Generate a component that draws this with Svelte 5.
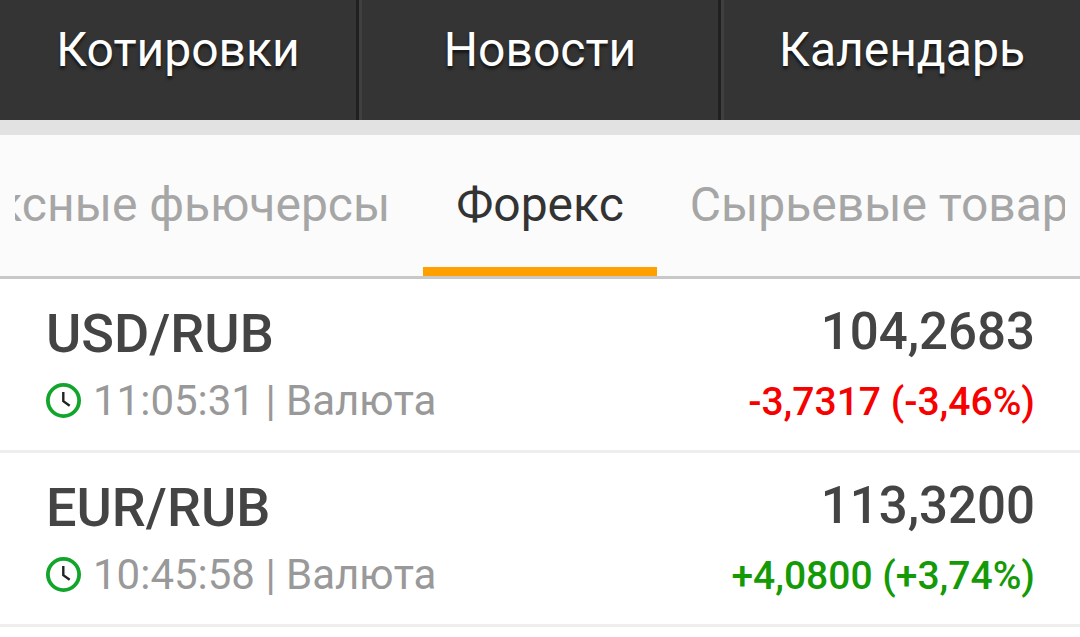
<script lang="ts">
	interface Quote {
		pair: string;
		time: string;
		type: string;
		price: string;
		change: string;
		rising: boolean;
	}

	const sections = ["Котировки", "Новости", "Календарь"];
	const categories = ["Индексные фьючерсы", "Форекс", "Сырьевые товары"];

	const quotes: Quote[] = [
		{
			pair: "USD/RUB",
			time: "11:05:31",
			type: "Валюта",
			price: "104,2683",
			change: "-3,7317 (-3,46%)",
			rising: false,
		},
		{
			pair: "EUR/RUB",
			time: "10:45:58",
			type: "Валюта",
			price: "113,3200",
			change: "+4,0800 (+3,74%)",
			rising: true,
		},
	];

	let selectedIndex = $state(1);

	// the selected tab stays in the middle, its neighbours run off the edges
	const before = $derived(categories.slice(0, selectedIndex));
	const after = $derived(categories.slice(selectedIndex + 1));
</script>

{#snippet tab(name: string)}
	{@const index = categories.indexOf(name)}
	<button
		type="button"
		class="categories__tab"
		class:categories__tab--selected={index === selectedIndex}
		role="tab"
		aria-selected={index === selectedIndex}
		onclick={() => (selectedIndex = index)}
	>
		{name}
	</button>
{/snippet}

<nav class="sections">
	{#each sections as section (section)}
		<a class="sections__item" href="#{section}">{section}</a>
	{/each}
</nav>

<div class="categories" role="tablist">
	<div class="categories__side categories__side--before">
		{#each before as name (name)}
			{@render tab(name)}
		{/each}
	</div>
	{@render tab(categories[selectedIndex])}
	<div class="categories__side">
		{#each after as name (name)}
			{@render tab(name)}
		{/each}
	</div>
</div>

<ul class="quotes">
	{#each quotes as quote (quote.pair)}
		<li class="quote">
			<div class="quote__info">
				<span class="quote__pair">{quote.pair}</span>
				<span class="quote__meta">
					<svg class="quote__clock" viewBox="0 0 35 35" aria-hidden="true">
						<circle cx="17.5" cy="17.5" r="15.6" fill="#fff" stroke="#12a52c" stroke-width="3.8" />
						<path d="M17.3 9v9.2l6.4 4.6" fill="none" stroke="#222" stroke-width="2.4" />
					</svg>
					{quote.time} | {quote.type}
				</span>
			</div>
			<div class="quote__values">
				<span class="quote__price">{quote.price}</span>
				<span class="quote__change" class:quote__change--rising={quote.rising}>
					{quote.change}
				</span>
			</div>
		</li>
	{/each}
</ul>

<style>
	:global(body) {
		background: #fff;
		font-family: Roboto, sans-serif;
	}

	.sections {
		display: flex;
		border-bottom: 15px solid #e2e2e2;
		background: #343434;
	}

	.sections__item {
		flex: 1;
		padding: 20px 0 40px;
		border-left: 3px solid #404040;
		border-right: 3px solid #202020;
		color: #fff;
		font-size: 48px;
		line-height: 60px;
		text-align: center;
		text-decoration: none;
		text-shadow: 0 3px 3px rgba(0, 0, 0, 0.6);
	}

	.sections__item:first-child {
		border-left: 0;
	}

	.sections__item:last-child {
		border-right: 0;
	}

	.categories {
		display: grid;
		grid-template-columns: minmax(0, 1fr) auto minmax(0, 1fr);
		padding: 0 15px;
		border-bottom: 3px solid #c8c8c8;
		background: #fbfbfb;
	}

	.categories__side {
		display: flex;
		overflow: hidden;
	}

	.categories__side--before {
		justify-content: flex-end;
	}

	.categories__tab {
		flex: none;
		padding: 42px 33px 34px;
		border: 0;
		border-bottom: 9px solid transparent;
		background: transparent;
		color: #a6a6a6;
		font-family: inherit;
		font-size: 48px;
		line-height: 56px;
		white-space: nowrap;
		cursor: pointer;
	}

	.categories__tab--selected {
		border-bottom-color: #ffa000;
		color: #333;
	}

	.quotes {
		margin: 0;
		padding: 0;
		list-style: none;
	}

	.quote {
		display: flex;
		justify-content: space-between;
		padding: 24px 45px 16px 46px;
		border-bottom: 3px solid #eee;
	}

	.quote__info,
	.quote__values {
		display: flex;
		flex-direction: column;
	}

	.quote__info {
		gap: 4px;
	}

	.quote__values {
		align-items: flex-end;
		gap: 10px;
	}

	.quote__pair {
		color: #444;
		font-size: 54px;
		font-weight: 500;
		line-height: 62px;
	}

	.quote__price {
		color: #444;
		font-size: 51px;
		font-weight: 500;
		line-height: 58px;
	}

	.quote__meta {
		display: flex;
		align-items: center;
		gap: 12px;
		color: #999;
		font-size: 42px;
		line-height: 63px;
	}

	.quote__clock {
		width: 35px;
		height: 35px;
	}

	.quote__change {
		color: #f60000;
		font-size: 39px;
		font-weight: 500;
		line-height: 63px;
	}

	.quote__change--rising {
		color: #149a06;
	}
</style>
